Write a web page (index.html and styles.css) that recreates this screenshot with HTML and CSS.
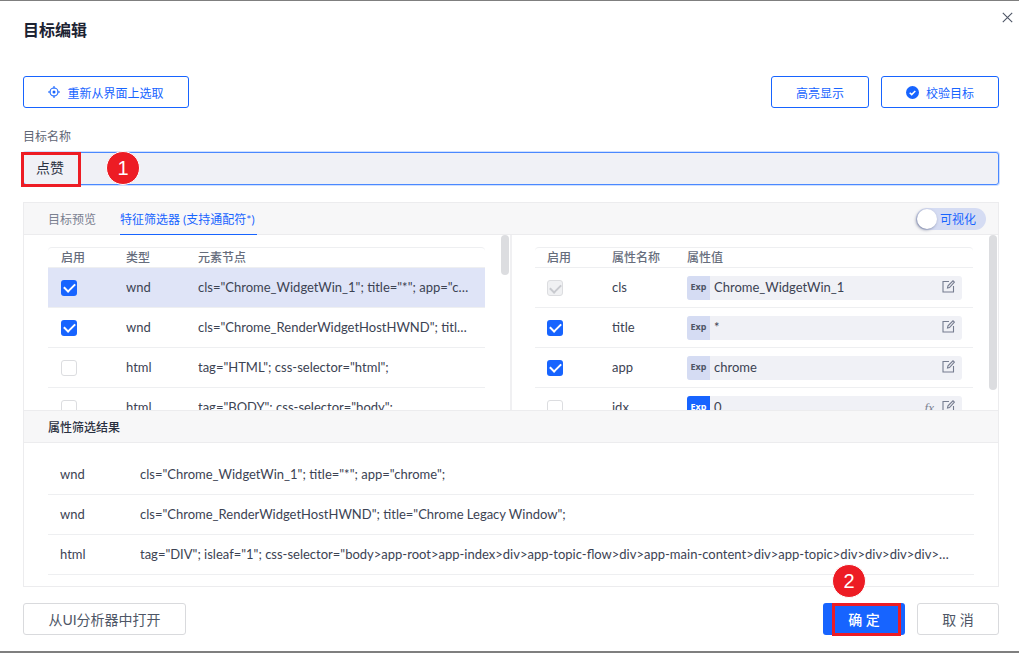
FILE: index.html
```html
<!DOCTYPE html>
<html lang="en">
<head>
    <meta charset="UTF-8">
    <meta name="viewport" content="width=device-width, initial-scale=1.0">
    <title>目标编辑</title>
    <link rel="stylesheet" href="styles.css">
</head>
<body>
    <div class="dialog">
        <button class="close-button" aria-label="关闭">
            <svg width="11" height="11" viewBox="0 0 11 11"><path d="M.8.8l9.4 9.4M10.2.8L.8 10.2" fill="none" stroke="#4e5666" stroke-width="1.1"/></svg>
        </button>
        <h1 class="title">目标编辑</h1>

        <!-- Top Buttons -->
        <div class="toolbar">
            <button class="btn btn-outline btn-pick">
                <svg width="12" height="12" viewBox="0 0 12 12"><circle cx="6" cy="6" r="4" fill="none" stroke="#1764ff" stroke-width="1.1"/><circle cx="6" cy="6" r="1.5" fill="#1764ff"/><path d="M6 0v2.400M6 9.600V12M0 6h2.400M9.600 6H12" stroke="#1764ff" stroke-width="1.1"/></svg>
                重新从界面上选取
            </button>
            <button class="btn btn-outline btn-light">高亮显示</button>
            <button class="btn btn-outline btn-check">
                <svg width="13" height="13" viewBox="0 0 13 13"><circle cx="6.500" cy="6.500" r="6.500" fill="#1764ff"/><path d="M3.700 6.700l2 1.900 3.600-3.700" fill="none" stroke="#fff" stroke-width="1.500"/></svg>
                校验目标
            </button>
        </div>

        <label class="field-label">目标名称</label>
        <div class="name-input">点赞</div>

        <div class="panel">
            <!-- Tabs -->
            <div class="tabs">
                <span class="tab">目标预览</span>
                <span class="tab tab-active">特征筛选器 (支持通配符*)</span>
                <span class="toggle"><i class="knob"></i>可视化</span>
            </div>

            <div class="panes">
                <!-- Element Nodes -->
                <div class="pane pane-left">
                    <div class="node-row table-head"><span>启用</span><span>类型</span><span>元素节点</span></div>
                    <div class="node-row row-selected"><i class="check on"></i><span>wnd</span><span class="cut">cls="Chrome_WidgetWin_1"; title="*"; app="chrome";</span></div>
                    <div class="node-row"><i class="check on"></i><span>wnd</span><span class="cut">cls="Chrome_RenderWidgetHostHWND"; title="Chrome Legacy Window";</span></div>
                    <div class="node-row"><i class="check"></i><span>html</span><span class="cut">tag="HTML"; css-selector="html";</span></div>
                    <div class="node-row"><i class="check"></i><span>html</span><span class="cut">tag="BODY"; css-selector="body";</span></div>
                </div>
                <div class="scrollbar scrollbar-left"></div>

                <!-- Attributes -->
                <div class="pane pane-right">
                    <div class="attr-row table-head"><span>启用</span><span>属性名称</span><span>属性值</span></div>
                    <div class="attr-row"><i class="check locked"></i><span>cls</span>
                        <div class="value"><b class="exp">Exp</b><span class="value-text">Chrome_WidgetWin_1</span><svg class="edit" width="13" height="13" viewBox="0 0 13 13"><path d="M7 1.500H1v10.500h10.500V6" fill="none" stroke="#767d90" stroke-width="1.100"/><path d="M5.500 8l.5-2.200L11 .8l1.400 1.400L7.500 7.500z" fill="none" stroke="#767d90" stroke-width="1.100"/></svg></div>
                    </div>
                    <div class="attr-row"><i class="check on"></i><span>title</span>
                        <div class="value"><b class="exp">Exp</b><span class="value-text">*</span><svg class="edit" width="13" height="13" viewBox="0 0 13 13"><path d="M7 1.500H1v10.500h10.500V6" fill="none" stroke="#767d90" stroke-width="1.100"/><path d="M5.500 8l.5-2.200L11 .8l1.400 1.400L7.500 7.500z" fill="none" stroke="#767d90" stroke-width="1.100"/></svg></div>
                    </div>
                    <div class="attr-row"><i class="check on"></i><span>app</span>
                        <div class="value"><b class="exp">Exp</b><span class="value-text">chrome</span><svg class="edit" width="13" height="13" viewBox="0 0 13 13"><path d="M7 1.500H1v10.500h10.500V6" fill="none" stroke="#767d90" stroke-width="1.100"/><path d="M5.500 8l.5-2.200L11 .8l1.400 1.400L7.500 7.500z" fill="none" stroke="#767d90" stroke-width="1.100"/></svg></div>
                    </div>
                    <div class="attr-row"><i class="check"></i><span>idx</span>
                        <div class="value"><b class="exp exp-on">Exp</b><span class="value-text">0</span><em class="fx">fx</em><svg class="edit" width="13" height="13" viewBox="0 0 13 13"><path d="M7 1.500H1v10.500h10.500V6" fill="none" stroke="#767d90" stroke-width="1.100"/><path d="M5.500 8l.5-2.200L11 .8l1.400 1.400L7.500 7.500z" fill="none" stroke="#767d90" stroke-width="1.100"/></svg></div>
                    </div>
                </div>
                <div class="scrollbar scrollbar-right"></div>
            </div>

            <!-- Filter Result -->
            <div class="result-title">属性筛选结果</div>
            <div class="results">
                <div class="result-row"><span>wnd</span><span class="cut">cls="Chrome_WidgetWin_1"; title="*"; app="chrome";</span></div>
                <div class="result-row"><span>wnd</span><span class="cut">cls="Chrome_RenderWidgetHostHWND"; title="Chrome Legacy Window";</span></div>
                <div class="result-row"><span>html</span><span class="cut">tag="DIV"; isleaf="1"; css-selector="body&gt;app-root&gt;app-index&gt;div&gt;app-topic-flow&gt;div&gt;app-main-content&gt;div&gt;app-topic&gt;div&gt;div&gt;div&gt;div&gt;div&gt;div";</span></div>
            </div>
        </div>

        <!-- Footer Buttons -->
        <div class="footer">
            <button class="btn btn-plain btn-analyzer">从UI分析器中打开</button>
            <button class="btn btn-primary">确 定</button>
            <button class="btn btn-plain btn-cancel">取 消</button>
        </div>

        <!-- Red Annotations -->
        <div class="mark-box mark-box-name"></div>
        <div class="mark-box mark-box-ok"></div>
        <div class="mark-num mark-num-1">1</div>
        <div class="mark-num mark-num-2">2</div>
    </div>
</body>
</html>
```

FILE: styles.css
```css
/* Body Styling */
* {
    box-sizing: border-box;
}

body {
    margin: 0;
    font-family: Lato, "Noto Sans CJK SC", sans-serif;
    font-size: 13px;
    color: #3c4353;
    background-color: #fff;
    overflow: hidden;
}

button {
    font-family: inherit;
}

/* Dialog */
.dialog {
    position: relative;
    height: 653px;
    padding: 0 20px 0 23px;
    border-top: 1px solid #7f7f7f;
    border-bottom: 2px solid #7f7f7f;
}

.title {
    margin: 0;
    padding-top: 18px;
    height: 75px;
    font-size: 16px;
    line-height: 22px;
    font-weight: 700;
    color: #1d2333;
}

.close-button {
    position: absolute;
    top: 11px;
    right: 6px;
    padding: 0;
    border: none;
    background: none;
    line-height: 0;
}

/* Buttons */
.btn {
    display: flex;
    align-items: center;
    justify-content: center;
    gap: 7px;
    height: 32px;
    padding: 0;
    border-radius: 3px;
    font-size: 12px;
    background-color: #fff;
}

.btn-outline {
    border: 1px solid #1764ff;
    color: #1764ff;
}

.btn-plain {
    border: 1px solid #d9dadd;
    color: #4e5666;
    font-size: 14px;
}

.btn-primary {
    width: 82px;
    margin-left: auto;
    border: none;
    background-color: #1764ff;
    color: #fff;
    font-size: 14px;
    font-weight: 500;
}

.toolbar {
    display: flex;
    height: 32px;
}

.btn-pick {
    width: 166px;
}

.btn-light {
    width: 98px;
    margin-left: auto;
}

.btn-check {
    width: 118px;
    margin-left: 12px;
}

.btn-analyzer {
    width: 163px;
}

.btn-cancel {
    width: 82px;
    margin-left: 12px;
}

/* Name Field */
.field-label {
    display: block;
    margin-top: 21px;
    height: 23px;
    line-height: 16px;
    font-size: 12px;
    color: #5f6675;
}

.name-input {
    height: 33px;
    padding-left: 12px;
    line-height: 30px;
    font-size: 14px;
    color: #2a3040;
    background-color: #f0f1f6;
    border: 1px solid #4a88ff;
    border-radius: 3px;
    box-shadow: 0 0 0 1px #cfe0ff;
}

/* Panel */
.panel {
    margin-top: 17px;
    height: 385px;
    border: 1px solid #ececee;
    border-top: none;
}

.tabs {
    display: flex;
    align-items: stretch;
    gap: 24px;
    height: 33px;
    padding: 0 12px 0 24px;
    font-size: 12px;
    background-color: #f7f7f8;
    border-top: 1px solid #ececee;
    border-bottom: 1px solid #ececee;
}

.tab {
    line-height: 33px;
    color: #7a8090;
}

.tab-active {
    width: 137px;
    color: #1764ff;
    border-bottom: 1px solid #1764ff;
    height: 32px;
}

.toggle {
    display: flex;
    align-items: center;
    gap: 3px;
    align-self: center;
    width: 70px;
    height: 22px;
    margin-left: auto;
    padding-left: 1px;
    border-radius: 11px;
    background-color: #d5dcf3;
    color: #1764ff;
}

.knob {
    width: 20px;
    height: 20px;
    border-radius: 50%;
    background-color: #fff;
    box-shadow: -1px 1px 3px rgba(40, 50, 90, 0.5);
}

.panes {
    display: flex;
    height: 175px;
    overflow: hidden;
}

.pane {
    overflow: hidden;
    padding-top: 12px;
}

.pane-left {
    width: 461px;
    padding-left: 24px;
}

.pane-right {
    width: 463px;
    padding-left: 23px;
    border-left: 2px solid #f0f0f2;
    margin-left: 1px;
}

.scrollbar {
    flex: none;
    width: 8px;
    border-radius: 4px;
    background-color: #dcdde0;
}

.scrollbar-left {
    height: 40px;
    margin-left: 16px;
}

.scrollbar-right {
    height: 155px;
    margin-left: 16px;
}

/* Tables */
.node-row,
.attr-row {
    display: grid;
    align-items: center;
    height: 40px;
    border-bottom: 1px solid #eeeff1;
}

.node-row {
    grid-template-columns: 65px 72px 275px;
    padding-left: 13px;
}

.attr-row {
    grid-template-columns: 65px 75px 275px;
    padding-left: 12px;
    width: 438px;
}

/* Text sits 1px above the row centre */
.node-row > span,
.attr-row > span,
.result-row > span,
.value-text {
    padding-bottom: 2px;
}

.table-head {
    height: 21px;
    border-top: 1px solid #eeeff1;
    border-radius: 4px 4px 0 0;
    font-size: 12px;
    font-weight: 500;
    line-height: 20px;
    color: #666d7c;
}

.table-head > span {
    padding-bottom: 0;
}

.row-selected {
    background-color: #dfe4f7;
}

.cut {
    overflow: hidden;
    white-space: nowrap;
    text-overflow: ellipsis;
}

/* Checkboxes */
.check {
    position: relative;
    display: block;
    width: 16px;
    height: 16px;
    border: 1px solid #dcdde0;
    border-radius: 3px;
    background-color: #fff;
}

.check.on {
    border: none;
    background-color: #1764ff;
}

.check.locked {
    background-color: #f0f1f3;
}

.check.on::after,
.check.locked::after {
    content: "";
    position: absolute;
    left: 3px;
    top: 3px;
    width: 9px;
    height: 5px;
    border-left: 2px solid #fff;
    border-bottom: 2px solid #fff;
    transform: rotate(-45deg);
}

.check.locked::after {
    left: 2px;
    border-color: #c8cacf;
}

/* Attribute Values */
.value {
    display: flex;
    align-items: center;
    height: 24px;
    border-radius: 3px;
    background-color: #f0f1f6;
    overflow: hidden;
}

.exp {
    flex: none;
    align-self: stretch;
    width: 23px;
    margin-right: 4px;
    text-align: center;
    font-family: "Noto Sans", sans-serif;
    font-size: 9px;
    line-height: 21px;
    color: #4e5666;
    background-color: #d5dcf3;
}

.exp-on {
    color: #fff;
    background-color: #1764ff;
}

.value-text {
    flex: 1;
}

.fx {
    margin-right: 8px;
    font-family: "Liberation Serif", serif;
    color: #7a8090;
}

.edit {
    flex: none;
    margin: 0 7px 3px 0;
}

/* Results */
.result-title {
    height: 33px;
    padding-left: 24px;
    line-height: 33px;
    font-size: 12px;
    font-weight: 500;
    color: #2a3040;
    background-color: #f7f7f8;
    border-top: 1px solid #ececee;
    border-bottom: 1px solid #ececee;
}

.results {
    padding: 12px 24px 0;
}

.result-row {
    display: grid;
    grid-template-columns: 80px 815px;
    align-items: center;
    height: 40px;
    padding-left: 12px;
    border-bottom: 1px solid #eeeff1;
}

/* Footer */
.footer {
    display: flex;
    margin-top: 16px;
}

/* Red Annotations */
.mark-box {
    position: absolute;
    border: 3px solid #ed1c24;
}

.mark-box-name {
    left: 21px;
    top: 151px;
    width: 60px;
    height: 35px;
}

.mark-box-ok {
    left: 832px;
    top: 602px;
    width: 69px;
    height: 33px;
}

.mark-num {
    position: absolute;
    width: 34px;
    height: 34px;
    border: 1px solid #fff;
    border-radius: 50%;
    background-color: #ed1c24;
    color: #fff;
    font-family: "Liberation Sans", sans-serif;
    font-size: 20px;
    line-height: 32px;
    text-align: center;
}

.mark-num-1 {
    left: 106px;
    top: 150px;
}

.mark-num-2 {
    left: 832px;
    top: 563px;
}
```
